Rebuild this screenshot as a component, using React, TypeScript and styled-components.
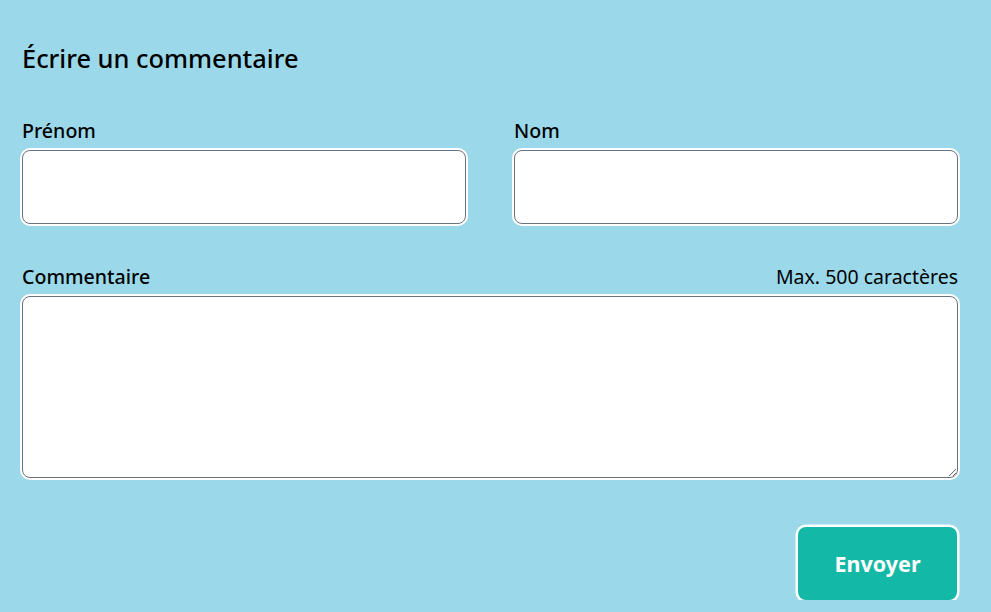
import React from "react";
import styled, { createGlobalStyle } from "styled-components";

const Global = createGlobalStyle`
  html, body { margin: 0; padding: 0; background: #9bd9ea; }
  body { font-family: "Noto Sans", "Open Sans", sans-serif; color: #000; }
  * { box-sizing: border-box; }
`;

const Form = styled.form`
  width: 936px;
  margin-left: 22px;
  padding-top: 39px;
  display: flex;
  flex-direction: column;
`;

const Title = styled.h2`
  margin: 0 0 42px;
  font-size: 25.4px;
  line-height: 38px;
  font-weight: 500;
`;

const Row = styled.div`
  display: grid;
  grid-template-columns: 1fr 1fr;
  column-gap: 48px;
`;

const Field = styled.div`
  display: flex;
  flex-direction: column;
`;

const LabelRow = styled.div`
  display: flex;
  justify-content: space-between;
  align-items: baseline;
  height: 31px;
`;

const Label = styled.label`
  font-size: 19.6px;
  line-height: 24px;
  font-weight: 500;
`;

const Hint = styled.span`
  font-size: 19.5px;
  line-height: 24px;
  font-weight: 400;
`;

const boxStyles = `
  border: 1px solid #6b7280;
  border-radius: 8px;
  background: #fff;
  box-shadow: 0 0 0 2px #fff;
  outline: none;
  font-family: inherit;
  font-size: 16px;
  padding: 8px 12px;
`;

const TextInput = styled.input`
  ${boxStyles}
  height: 74px;
  width: 100%;
`;

const TextArea = styled.textarea`
  ${boxStyles}
  height: 182px;
  width: 100%;
  resize: vertical;
  display: block;
`;

const Spacer = styled.div<{ $h: number }>`
  height: ${(p) => p.$h}px;
`;

const Actions = styled.div`
  display: flex;
  justify-content: flex-end;
  margin-right: 1px;
`;

const Button = styled.button`
  width: 159px;
  height: 73px;
  margin-top: 49px;
  background: #14b8a6;
  color: #fff;
  border: none;
  border-radius: 8px;
  box-shadow: 0 0 0 2.5px #fff;
  font-family: inherit;
  font-size: 21.5px;
  font-weight: 700;
  cursor: pointer;
`;

export default function App() {
  return (
    <>
      <Global />
      <Form onSubmit={(e) => e.preventDefault()}>
        <Title>Écrire un commentaire</Title>
        <Row>
          <Field>
            <LabelRow>
              <Label htmlFor="prenom">Prénom</Label>
            </LabelRow>
            <TextInput id="prenom" type="text" />
          </Field>
          <Field>
            <LabelRow>
              <Label htmlFor="nom">Nom</Label>
            </LabelRow>
            <TextInput id="nom" type="text" />
          </Field>
        </Row>
        <Spacer $h={41} />
        <Field>
          <LabelRow>
            <Label htmlFor="commentaire">Commentaire</Label>
            <Hint>Max. 500 caractères</Hint>
          </LabelRow>
          <TextArea id="commentaire" maxLength={500} />
        </Field>
        <Actions>
          <Button type="submit">Envoyer</Button>
        </Actions>
      </Form>
    </>
  );
}
